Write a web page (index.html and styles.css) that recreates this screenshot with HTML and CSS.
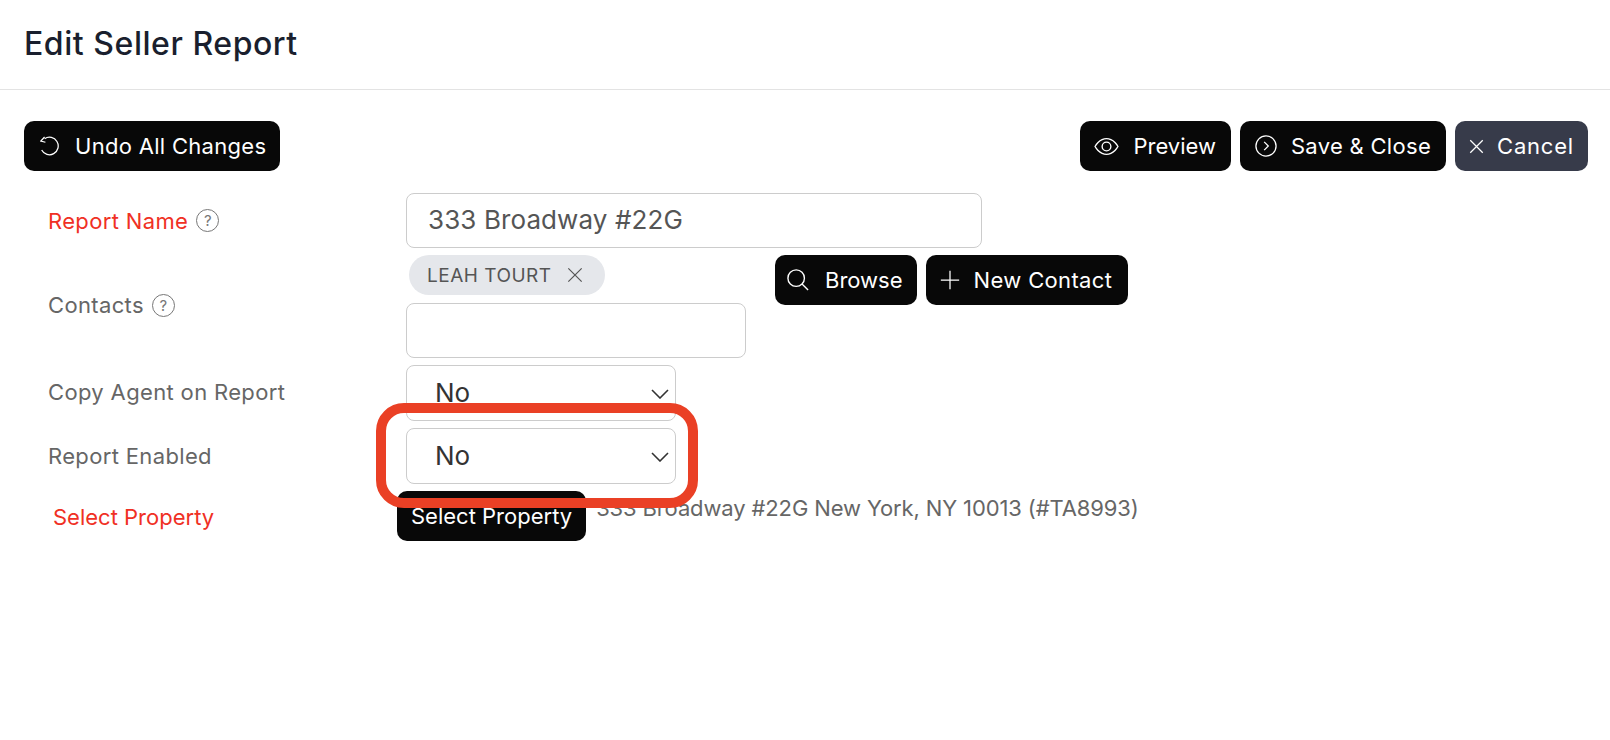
FILE: index.html
```html
<!doctype html>
<html>
    <head>
        <title>Edit Seller Report</title>
        <meta charset="utf-8">
        <link rel="stylesheet" href="styles.css">
    </head>

    <body>
        <header class="page_header">
            <h1>Edit Seller Report</h1>
        </header>

        <section class="toolbar">
            <button class="btn btn_undo">
                <svg class="icon" viewBox="0 0 24 24"><path d="M5.6 3.2A10.5 10.5 0 1 1 2 16.8"/><path d="M5.5 1.2 1 6l5.5 1.5"/></svg>
                Undo All Changes
            </button>

            <div class="toolbar_right">
                <button class="btn btn_preview">
                    <svg class="icon icon_eye" viewBox="0 0 24 24"><path d="M1 12s4-7.5 11-7.5S23 12 23 12s-4 7.5-11 7.5S1 12 1 12z"/><circle cx="12" cy="12" r="4.2"/></svg>
                    Preview
                </button>
                <button class="btn btn_save">
                    <svg class="icon icon_save" viewBox="0 0 24 24"><circle cx="12" cy="12" r="11"/><path d="m10 7.5 4.5 4.5-4.5 4.5"/></svg>
                    Save &amp; Close
                </button>
                <button class="btn btn_grey">
                    <svg class="icon icon_small" viewBox="0 0 24 24"><path d="M2 2l20 20M22 2 2 22"/></svg>
                    Cancel
                </button>
            </div>
        </section>

        <form class="report_form">
            <label class="label required">Report Name <span class="help">?</span></label>
            <div>
                <input class="text_input name_input" type="text" value="333 Broadway #22G">
            </div>

            <label class="label label_up">Contacts <span class="help">?</span></label>
            <div class="contacts">
                <div class="contacts_left">
                    <span class="chip">LEAH TOURT
                        <svg class="chip_x" viewBox="0 0 24 24"><path d="M2 2l20 20M22 2 2 22"/></svg>
                    </span>
                    <input class="text_input contact_input" type="text">
                </div>
                <button class="btn btn_browse" type="button">
                    <svg class="icon icon_browse" viewBox="0 0 24 24"><circle cx="10" cy="10" r="9"/><path d="m16.4 16.4 6.6 6.6"/></svg>
                    Browse
                </button>
                <button class="btn btn_new" type="button">
                    <svg class="icon" viewBox="0 0 24 24"><path d="M12 1v22M1 12h22"/></svg>
                    New Contact
                </button>
            </div>

            <label class="label label_up">Copy Agent on Report</label>
            <div class="select_wrap">
                <select class="select"><option>No</option><option>Yes</option></select>
                <svg class="chevron" viewBox="0 0 18 10"><path d="m1 1 8 8 8-8"/></svg>
            </div>

            <label class="label">Report Enabled</label>
            <div class="select_wrap">
                <select class="select"><option>No</option><option>Yes</option></select>
                <svg class="chevron" viewBox="0 0 18 10"><path d="m1 1 8 8 8-8"/></svg>
                <div class="highlight"></div>
            </div>

            <label class="label required property_label">Select Property</label>
            <div class="property">
                <button class="btn property_btn" type="button">Select Property</button>
                <span class="property_text">333 Broadway #22G New York, NY 10013 (#TA8993)</span>
            </div>
        </form>
    </body>
</html>
```

FILE: styles.css
```css
* {
    box-sizing: border-box;
}

body {
    margin: 0;
    background: #fff;
    font-family: "Inter", "Open Sans", sans-serif;
    color: #666;
}

.page_header {
    height: 90px;
    padding: 0 24px 3px;
    display: flex;
    align-items: center;
    border-bottom: 1px solid #e3e3e3;
}

.page_header h1 {
    margin: 0;
    font-size: 32px;
    font-weight: 500;
    letter-spacing: 0.55px;
    color: #1a1f2e;
}

.toolbar {
    display: flex;
    justify-content: space-between;
    padding: 31px 22px 0 24px;
}

.toolbar_right {
    display: flex;
    gap: 9px;
}

.btn {
    height: 50px;
    padding: 0 14px;
    display: inline-flex;
    align-items: center;
    gap: 15px;
    border: none;
    border-radius: 10px;
    background: #080808;
    color: #fff;
    font-family: inherit;
    font-size: 22px;
    letter-spacing: 0.3px;
    white-space: nowrap;
}

.btn_undo {
    padding-left: 16px;
}

.btn_preview {
    padding: 0 15px 0 14px;
    gap: 14px;
    letter-spacing: 0;
}

.btn_save {
    padding: 0 15px;
    gap: 14px;
}

.btn_grey {
    gap: 13px;
    background: #373b4a;
    letter-spacing: 0.8px;
}

.btn_browse {
    padding-left: 12px;
    gap: 16px;
    letter-spacing: 0;
}

.btn_new {
    padding-right: 16px;
    gap: 14px;
    letter-spacing: 0.35px;
}

.property_btn {
    letter-spacing: 0;
}

.icon {
    width: 20px;
    height: 20px;
    flex: none;
    fill: none;
    stroke: #fff;
    stroke-width: 1.5;
}

.icon_eye {
    width: 25px;
    height: 25px;
    stroke-width: 1.3;
}

.icon_save {
    width: 22px;
    height: 22px;
    stroke-width: 1.4;
}

.icon_small {
    width: 15px;
    height: 15px;
    stroke-width: 2;
}

.icon_browse {
    width: 22px;
    height: 22px;
}

.report_form {
    display: grid;
    grid-template-columns: 358px 1fr;
    row-gap: 7px;
    padding: 22px 0 0 48px;
}

.label {
    display: flex;
    align-items: center;
    gap: 8px;
    font-size: 22px;
    letter-spacing: 0.35px;
    color: #666;
}

.label_up {
    padding-bottom: 3px;
}

.required {
    color: #f03024;
}

.property_label {
    padding: 2px 0 0 5px;
    letter-spacing: 0;
}

.help {
    width: 23px;
    height: 23px;
    display: inline-flex;
    align-items: center;
    justify-content: center;
    border: 1.5px solid #777;
    border-radius: 50%;
    font-size: 15px;
    letter-spacing: 0;
    color: #777;
}

.text_input {
    display: block;
    height: 55px;
    padding: 0 21px 2px;
    border: 1px solid #ccc;
    border-radius: 8px;
    background: #fff;
    font-family: inherit;
    font-size: 26px;
    letter-spacing: 0.1px;
    color: #555;
}

.name_input {
    width: 576px;
}

.contacts {
    display: flex;
    align-items: flex-start;
    gap: 9px;
}

.contacts_left {
    width: 360px;
    display: flex;
    flex-direction: column;
    align-items: flex-start;
    gap: 8px;
}

.contact_input {
    width: 340px;
}

.chip {
    height: 40px;
    margin-left: 3px;
    padding: 0 22px 0 18px;
    display: inline-flex;
    align-items: center;
    gap: 15px;
    border-radius: 20px;
    background: #e5e7eb;
    font-size: 19px;
    letter-spacing: 0.5px;
    color: #555;
}

.chip_x {
    width: 16px;
    height: 16px;
    fill: none;
    stroke: #555;
    stroke-width: 1.8;
}

.select_wrap {
    position: relative;
    width: 270px;
    height: 56px;
}

.select {
    width: 100%;
    height: 100%;
    padding: 0 0 1px 28px;
    appearance: none;
    border: 1px solid #ccc;
    border-radius: 8px;
    background: #fff;
    font-family: inherit;
    font-size: 26px;
    color: #333;
}

.chevron {
    position: absolute;
    top: 24px;
    right: 7px;
    width: 18px;
    height: 10px;
    fill: none;
    stroke: #333;
    stroke-width: 1.6;
    pointer-events: none;
}

.highlight {
    position: absolute;
    top: -25px;
    right: -22px;
    bottom: -24px;
    left: -30px;
    border: 10px solid #ea4025;
    border-radius: 28px;
    pointer-events: none;
    z-index: 2;
}

.property {
    display: flex;
    align-items: flex-start;
    gap: 10px;
    margin-left: -9px;
}

.property_text {
    font-size: 22px;
    letter-spacing: -0.13px;
    line-height: 34px;
    white-space: nowrap;
}
```
